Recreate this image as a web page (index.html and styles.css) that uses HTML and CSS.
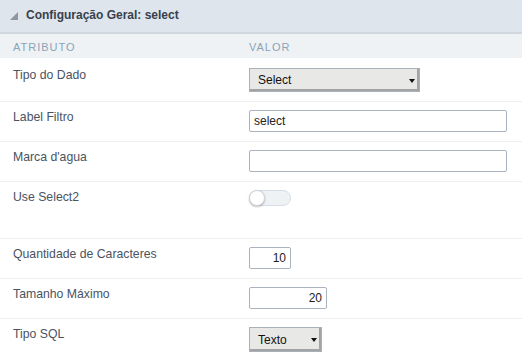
FILE: index.html
```html
<!DOCTYPE html>
<html lang="pt">
<head>
<meta charset="utf-8">
<title>Configuração Geral</title>
<link rel="stylesheet" href="styles.css">
</head>
<body>
<div class="panel">
  <div class="panel-head">
    <svg class="caret" width="8" height="8" viewBox="0 0 8 8"><polygon points="8,0 8,8 0,8" fill="#8d96a1"/></svg>
    <span class="panel-title">Configuração Geral: select</span>
  </div>
  <div class="cols">
    <div class="col-name">ATRIBUTO</div>
    <div class="col-name">VALOR</div>
  </div>
  <div class="row first">
    <div class="label">Tipo do Dado</div>
    <div class="value"><span class="sel sel-wide">Select</span></div>
  </div>
  <div class="row">
    <div class="label">Label Filtro</div>
    <div class="value"><input class="txt txt-wide" type="text" value="select"></div>
  </div>
  <div class="row">
    <div class="label">Marca d'agua</div>
    <div class="value"><input class="txt txt-wide" type="text" value=""></div>
  </div>
  <div class="row">
    <div class="label">Use Select2</div>
    <div class="value tall"><span class="toggle"><span class="knob"></span></span></div>
  </div>
  <div class="row">
    <div class="label">Quantidade de Caracteres</div>
    <div class="value"><input class="txt num txt-s" type="text" value="10"></div>
  </div>
  <div class="row">
    <div class="label">Tamanho Máximo</div>
    <div class="value"><input class="txt num txt-m" type="text" value="20"></div>
  </div>
  <div class="row last">
    <div class="label">Tipo SQL</div>
    <div class="value"><span class="sel sel-s">Texto</span></div>
  </div>
</div>
</body>
</html>
```
FILE: styles.css
```css
* { box-sizing: border-box; }
html, body { margin: 0; padding: 0; background: #fff; }
body { font-family: "Liberation Sans", Arial, sans-serif; font-size: 12px; }

.panel { width: 522px; }

.panel-head {
  height: 34px;
  background: #dfe5ec;
  border-bottom: 2px solid #d0d7df;
  display: flex;
  align-items: center;
  padding: 0 0 2px 10px;
}
.caret { margin-right: 8px; margin-top: 1px; }
.panel-title { font-weight: bold; font-size: 12px; color: #37414d; }

.cols {
  display: grid;
  grid-template-columns: 236px 1fr;
  height: 24px;
  align-items: center;
  background: #eef2f5;
}
.col-name {
  padding-left: 13px;
  font-size: 11px;
  letter-spacing: 1px;
  color: #8ba3b6;
  padding-top: 1px;
}

.row {
  display: grid;
  grid-template-columns: 236px 1fr;
  border-bottom: 1px solid #eceff2;
}
.row.last { border-bottom: none; }
.label {
  padding: 7px 13px 0 13px;
  line-height: 16px;
  color: #4a5361;
  font-size: 12.25px;
}
.row.first .label { padding-top: 9px; }
.value { padding: 8px 15px 9px 13px; display: flex; align-items: flex-start; }
.row.first .value { padding-top: 10px; }
.value.tall { min-height: 56px; }

.txt {
  height: 22px;
  border: 1px solid #aab4c0;
  border-radius: 2px;
  font-family: "Liberation Sans", Arial, sans-serif;
  font-size: 12px;
  color: #222;
  padding: 0 4px;
  background: #fff;
  outline: none;
}
.txt-wide { width: 258px; }
.txt-s { width: 42px; }
.txt-m { width: 78px; }
.num { text-align: right; }

.sel {
  position: relative;
  display: inline-flex;
  align-items: center;
  height: 24px;
  padding-left: 8px;
  background: #e8e8e6;
  border: 1px solid #a9b0b9;
  box-shadow: inset -2px -2px 0 #a3a3a3;
  color: #111;
  font-size: 12px;
}
.sel::after {
  content: "";
  position: absolute;
  right: 4px;
  top: 10px;
  border-left: 3px solid transparent;
  border-right: 3px solid transparent;
  border-top: 4px solid #111;
}
.sel-wide { width: 171px; }
.sel-s { width: 73px; height: 25px; }

.toggle {
  position: relative;
  display: inline-block;
  width: 42px;
  height: 16px;
  border-radius: 8px;
  background: #eef2f5;
  border: 1px solid #d6dde4;
}
.knob {
  position: absolute;
  left: -1px;
  top: -1px;
  width: 16px;
  height: 16px;
  border-radius: 50%;
  background: #fff;
  border: 1px solid #cfd5db;
  box-shadow: 0 1px 2px rgba(0,0,0,0.25);
}
```
